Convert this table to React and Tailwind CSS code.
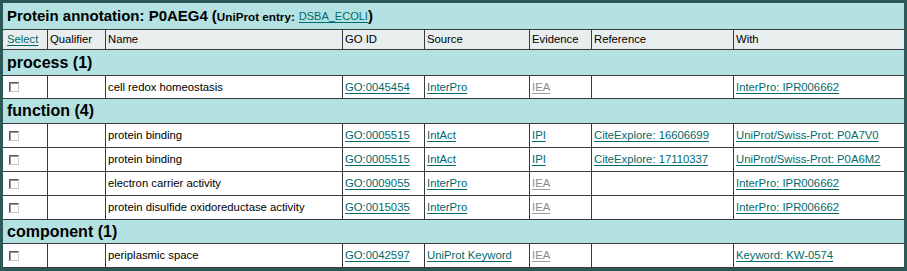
import React from "react";

const COLS = "grid grid-cols-[45px_58px_237px_82px_105px_62px_142px_170px]";

function Link({ children, gray }) {
  return (
    <a
      href="#"
      className={
        gray
          ? "text-[#8a8a8a] underline underline-offset-2 decoration-[#9a9a9a]"
          : "text-[#006a6a] underline underline-offset-2 decoration-[#006a6a]"
      }
    >
      {children}
    </a>
  );
}

function Checkbox() {
  return (
    <span className="block w-[10px] h-[10px] bg-white border border-t-[#555] border-l-[#555] border-r-[#c8c8c8] border-b-[#c8c8c8] shadow-[inset_1px_1px_0_#999]" />
  );
}

function Cell({ children, last, className = "" }) {
  return (
    <div
      className={
        "flex items-center pl-[2px] whitespace-nowrap overflow-hidden " +
        (last ? "" : "border-r border-[#3a3a3a] ") +
        className
      }
    >
      {children}
    </div>
  );
}

function DataRow({ name, go, source, ev, evGray, refText, withText, h, borderB }) {
  return (
    <div
      className={
        COLS +
        " bg-white border-t border-[#3a3a3a] " +
        (borderB ? "border-b " : "") +
        h
      }
    >
      <Cell className="pl-[6px]">
        <Checkbox />
      </Cell>
      <Cell />
      <Cell>{name}</Cell>
      <Cell>
        <Link>{go}</Link>
      </Cell>
      <Cell>
        <Link>{source}</Link>
      </Cell>
      <Cell>
        <Link gray={evGray}>{ev}</Link>
      </Cell>
      <Cell>{refText ? <Link>{refText}</Link> : null}</Cell>
      <Cell last>
        <Link>{withText}</Link>
      </Cell>
    </div>
  );
}

function Section({ children, h }) {
  return (
    <div className={"flex items-center pl-[4px] text-[16px] font-bold text-black " + h}>
      {children}
    </div>
  );
}

export default function App() {
  return (
    <div
      className="w-[907px] h-[271px] bg-[#2c5858] p-[3px] text-[11.3px] text-black"
      style={{ fontFamily: '"Liberation Sans", Arial, sans-serif' }}
    >
      <div className="h-full bg-[#b4e2e2]">
        <div className="h-[26px] flex items-center pl-[4px] pt-[1px]">
          <span className="text-[15px] font-bold">Protein annotation: P0AEG4</span>
          <span className="text-[15px] font-bold ml-[4px]">(</span>
          <span className="text-[11.7px] font-bold">UniProt entry:</span>
          <span className="ml-[4px] text-[11px]">
            <Link>DSBA_ECOLI</Link>
          </span>
          <span className="text-[15px] font-bold">)</span>
        </div>

        <div className={COLS + " h-[21px] bg-[#e8eeee] border-y border-[#3a3a3a]"}>
          <Cell className="pl-[4px]">
            <Link>Select</Link>
          </Cell>
          <Cell>Qualifier</Cell>
          <Cell>Name</Cell>
          <Cell>GO ID</Cell>
          <Cell>Source</Cell>
          <Cell>Evidence</Cell>
          <Cell>Reference</Cell>
          <Cell last>With</Cell>
        </div>

        <Section h="h-[25px]">process (1)</Section>
        <DataRow
          h="h-[24px]"
          borderB
          name="cell redox homeostasis"
          go="GO:0045454"
          source="InterPro"
          ev="IEA"
          evGray
          withText="InterPro: IPR006662"
        />

        <Section h="h-[24px]">function (4)</Section>
        <DataRow
          h="h-[24px]"
          name="protein binding"
          go="GO:0005515"
          source="IntAct"
          ev="IPI"
          refText="CiteExplore: 16606699"
          withText="UniProt/Swiss-Prot: P0A7V0"
        />
        <DataRow
          h="h-[24px]"
          name="protein binding"
          go="GO:0005515"
          source="IntAct"
          ev="IPI"
          refText="CiteExplore: 17110337"
          withText="UniProt/Swiss-Prot: P0A6M2"
        />
        <DataRow
          h="h-[24px]"
          name="electron carrier activity"
          go="GO:0009055"
          source="InterPro"
          ev="IEA"
          evGray
          withText="InterPro: IPR006662"
        />
        <DataRow
          h="h-[25px]"
          borderB
          name="protein disulfide oxidoreductase activity"
          go="GO:0015035"
          source="InterPro"
          ev="IEA"
          evGray
          withText="InterPro: IPR006662"
        />

        <Section h="h-[23px]">component (1)</Section>
        <DataRow
          h="h-[25px]"
          borderB
          name="periplasmic space"
          go="GO:0042597"
          source="UniProt Keyword"
          ev="IEA"
          evGray
          withText="Keyword: KW-0574"
        />
      </div>
    </div>
  );
}
